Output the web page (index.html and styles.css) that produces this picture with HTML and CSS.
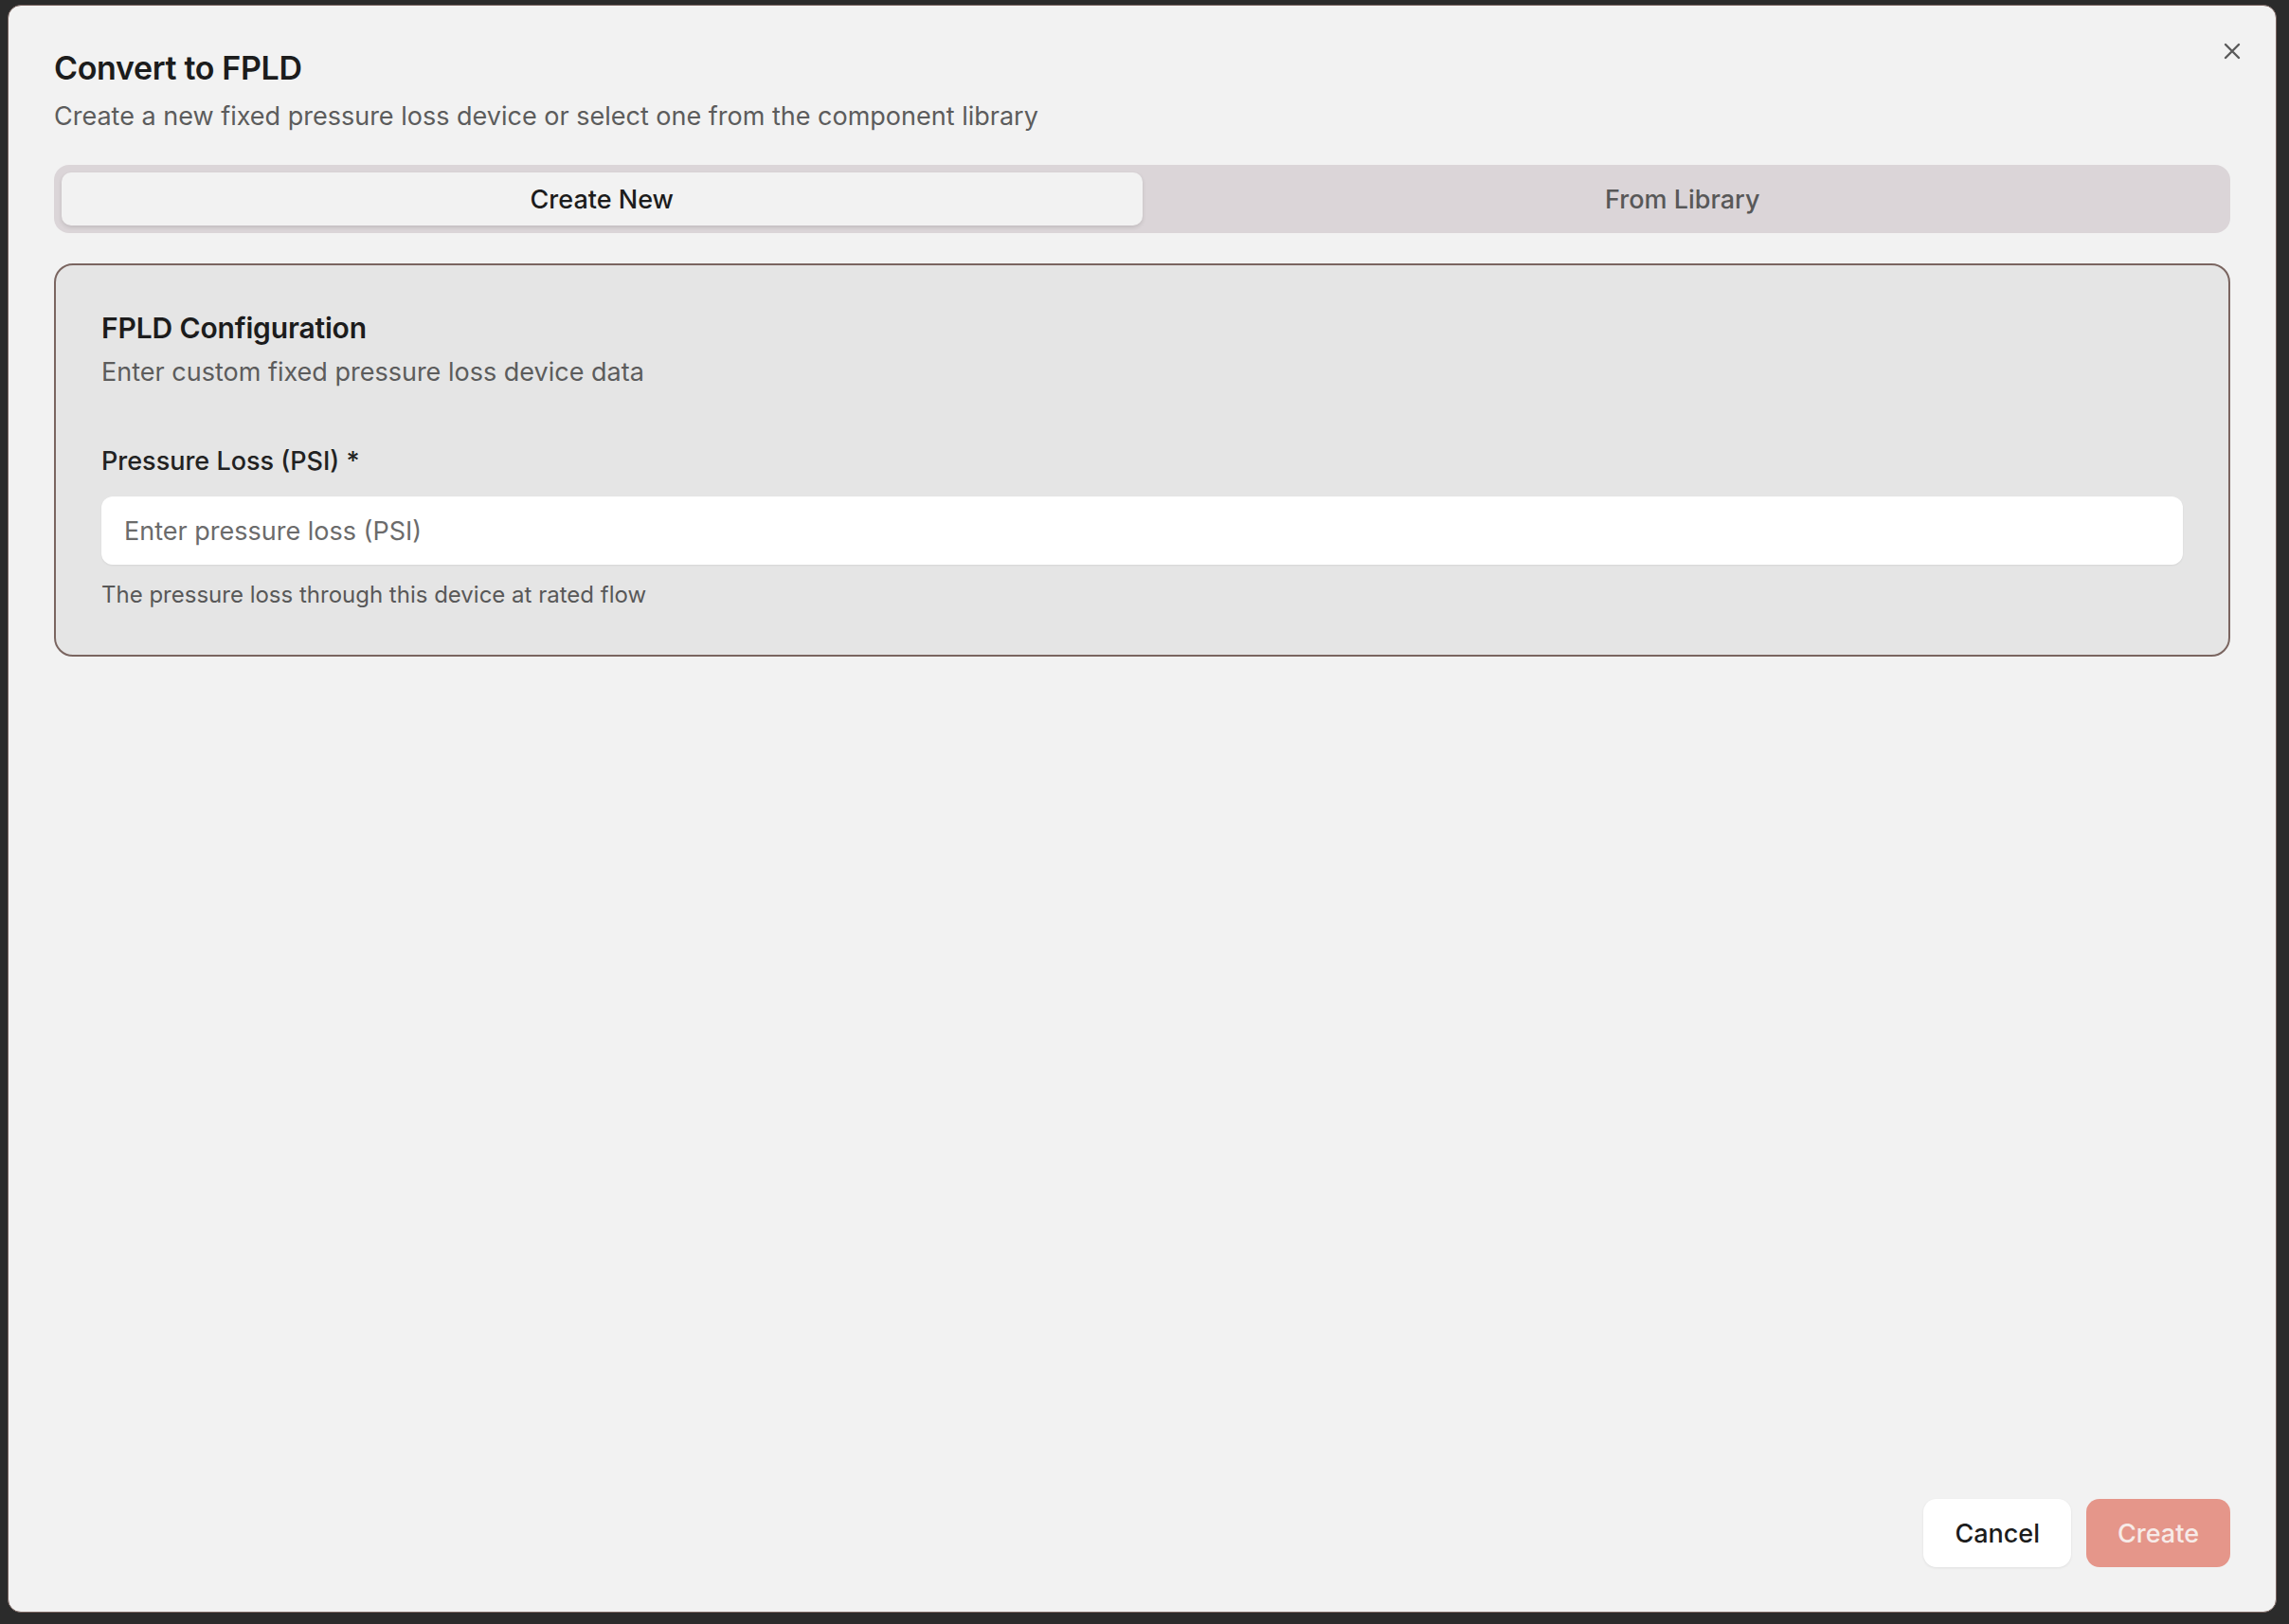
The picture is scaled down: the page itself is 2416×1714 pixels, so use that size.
FILE: index.html
```html
<!DOCTYPE html>
<html lang="en">
<head>
<meta charset="utf-8">
<title>Convert to FPLD</title>
<link rel="stylesheet" href="styles.css">
</head>
<body>

<div class="dialog" role="dialog" aria-labelledby="dlg-title">
    <button class="close" aria-label="Close">
        <svg width="18" height="18" viewBox="0 0 18 18" fill="none" stroke="currentColor" stroke-width="2.4" stroke-linecap="round">
            <path d="M2 2 L16 16 M16 2 L2 16"/>
        </svg>
    </button>

    <h1 id="dlg-title" class="title">Convert to FPLD</h1>
    <p class="subtitle">Create a new fixed pressure loss device or select one from the component library</p>

    <div class="tabs">
        <button class="tab active">Create New</button>
        <button class="tab">From Library</button>
    </div>

    <div class="card">
        <h2 class="card-title">FPLD Configuration</h2>
        <p class="card-desc">Enter custom fixed pressure loss device data</p>

        <div class="field">
            <label class="label" for="pressure-loss">Pressure Loss (PSI) *</label>
            <input id="pressure-loss" class="input" type="text" placeholder="Enter pressure loss (PSI)">
            <p class="hint">The pressure loss through this device at rated flow</p>
        </div>
    </div>

    <div class="footer">
        <button class="btn btn-cancel">Cancel</button>
        <button class="btn btn-create">Create</button>
    </div>
</div>

</body>
</html>
```

FILE: styles.css
```css
html, body { height: 100%; }
body { margin: 0; background: #2b2b2b; font-family: Inter, "Noto Sans", sans-serif; color: #1c1c1c; overflow: hidden; }

button { font-family: inherit; cursor: pointer; }

.dialog {
    position: relative;
    box-sizing: border-box;
    display: flex;
    flex-direction: column;
    width: 2395px;
    height: 1697px;
    margin: 5px 0 0 8px;
    padding: 46px 48px 47px 48px;
    background: #f2f2f2;
    border: 1px solid #7a6560;
    border-radius: 14px;
}

.close { position: absolute; top: 36px; right: 34px; width: 24px; height: 24px; padding: 3px; border: 0; background: none; color: #5a5a5a; }
.close svg { display: block; }

.title { margin: 0; font-size: 34px; line-height: 40px; font-weight: 600; letter-spacing: -0.01em; color: #1c1c1c; }
.subtitle { margin: 11px 0 0; font-size: 27px; line-height: 39px; color: #5c5c5c; }

/* tabs */
.tabs { display: flex; margin-top: 32px; padding: 8px; background: #dbd5d8; border-radius: 16px; }
.tab { flex: 1; height: 56px; border: 0; border-radius: 10px; background: transparent; font-size: 27px; font-weight: 500; color: #585858; }
.tab.active { background: #f2f2f2; color: #1c1c1c; box-shadow: 0 2px 4px rgba(0, 0, 0, 0.12); }

/* card */
.card { margin-top: 32px; padding: 48px 48px 46px; background: #e5e5e5; border: 2px solid #7a6560; border-radius: 20px; }
.card-title { margin: 0; font-size: 30px; line-height: 36px; font-weight: 600; letter-spacing: -0.005em; color: #1c1c1c; }
.card-desc { margin: 9px 0 0; font-size: 27px; line-height: 39px; color: #5c5c5c; }

.field { margin-top: 55px; }
.label { display: block; font-size: 27px; line-height: 39px; font-weight: 500; color: #222; }
.input { display: block; box-sizing: border-box; width: 100%; height: 72px; margin-top: 18px; padding: 0 24px; border: 0; border-radius: 12px; background: #fff; box-shadow: 0 1px 2px rgba(0, 0, 0, 0.07); font-family: inherit; font-size: 27px; color: #1c1c1c; outline: none; }
.input::placeholder { color: #6b6b6b; }
.hint { margin: 15px 0 0; font-size: 24px; line-height: 34px; color: #585858; }

/* footer */
.footer { display: flex; justify-content: flex-end; gap: 16px; margin-top: auto; }
.btn { height: 72px; padding: 0 33px; border: 0; border-radius: 14px; font-size: 27px; font-weight: 500; }
.btn-cancel { background: #fff; color: #1c1c1c; box-shadow: 0 1px 3px rgba(0, 0, 0, 0.08); }
.btn-create { background: #e5968a; color: #f7ebe8; }
```
